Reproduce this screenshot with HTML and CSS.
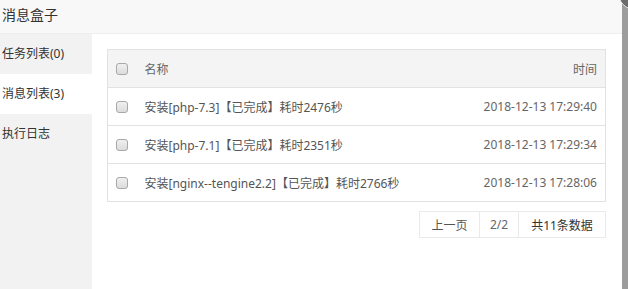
FILE: index.html
```html
<!DOCTYPE html>
<html lang="zh-CN">
<head>
<meta charset="utf-8">
<title>消息盒子</title>
<link rel="stylesheet" href="styles.css">
</head>
<body>
<div class="layer">
  <div class="layer-title">消息盒子</div>
  <span class="layer-close"></span>
  <div class="layer-body">
    <ul class="side">
      <li class="side-item">任务列表(0)</li>
      <li class="side-item active">消息列表(3)</li>
      <li class="side-item">执行日志</li>
    </ul>
    <div class="main">
      <table class="tbl">
        <thead>
          <tr>
            <th class="c-chk"><span class="chk"></span></th>
            <th class="c-name">名称</th>
            <th class="c-time">时间</th>
          </tr>
        </thead>
        <tbody>
          <tr>
            <td class="c-chk"><span class="chk"></span></td>
            <td class="c-name">安装[php-7.3]【已完成】耗时2476秒</td>
            <td class="c-time">2018-12-13 17:29:40</td>
          </tr>
          <tr>
            <td class="c-chk"><span class="chk"></span></td>
            <td class="c-name">安装[php-7.1]【已完成】耗时2351秒</td>
            <td class="c-time">2018-12-13 17:29:34</td>
          </tr>
          <tr>
            <td class="c-chk"><span class="chk"></span></td>
            <td class="c-name">安装[nginx--tengine2.2]【已完成】耗时2766秒</td>
            <td class="c-time">2018-12-13 17:28:06</td>
          </tr>
        </tbody>
      </table>
      <div class="pager-wrap">
        <div class="pager">
          <span class="pg pg-prev">上一页</span>
          <span class="pg pg-num">2/2</span>
          <span class="pg pg-total">共11条数据</span>
        </div>
      </div>
    </div>
  </div>
</div>
</body>
</html>
```
FILE: styles.css
```css
html, body {
  margin: 0;
  padding: 0;
}
body {
  width: 628px;
  height: 289px;
  overflow: hidden;
  background: #9c9c9c;
  font-family: "Noto Sans", "Noto Sans CJK SC", sans-serif;
  color: #333;
}
.layer {
  position: relative;
  width: 622px;
  height: 289px;
  background: #fff;
  display: flex;
  flex-direction: column;
}
.layer-title {
  height: 33px;
  line-height: 30px;
  padding-left: 2px;
  font-size: 14px;
  color: #333;
  background: #f8f8f8;
  border-bottom: 1px solid #eee;
  flex: none;
}
.layer-close {
  position: absolute;
  right: -30px;
  top: -24px;
  width: 32px;
  height: 32px;
  border-radius: 50%;
  background: #6b6b6b;
  border: 1px solid #e8e8e8;
}
.layer-body {
  flex: 1;
  display: flex;
}
.side {
  list-style: none;
  margin: 0;
  padding: 0;
  width: 92px;
  background: #f2f2f2;
  flex: none;
}
.side-item {
  height: 40px;
  line-height: 39px;
  padding-left: 2px;
  font-size: 12px;
  color: #333;
}
.side-item.active {
  background: #fff;
}
.main {
  flex: 1;
  padding: 15px 16px 0 15px;
}
.tbl {
  width: 100%;
  border-collapse: collapse;
  border: 1px solid #e2e2e2;
  font-size: 12px;
}
.tbl th, .tbl td {
  height: 38px;
  padding: 0;
  border-bottom: 1px solid #e2e2e2;
  font-weight: normal;
  color: #555;
  box-sizing: border-box;
}
.tbl thead tr {
  background: #f4f4f4;
}
.tbl th {
  color: #666;
}
.c-chk {
  width: 37px;
  padding-left: 8px !important;
  text-align: left;
}
.c-name {
  text-align: left;
}
.c-time {
  text-align: right;
  padding-right: 8px !important;
}
.tbl td.c-time {
  color: #666;
}
.chk {
  display: inline-block;
  width: 10px;
  height: 10px;
  border: 1px solid #a9a9a9;
  border-radius: 3px;
  background: linear-gradient(#f0f0f0, #dcdcdc);
  vertical-align: middle;
  position: relative;
  top: -1px;
}
.pager-wrap {
  display: flex;
  justify-content: flex-end;
  margin-top: 9px;
}
.pager {
  display: flex;
  border: 1px solid #eaeaea;
  height: 25px;
  font-size: 12px;
}
.pg {
  display: flex;
  align-items: center;
  justify-content: center;
  color: #333;
}
.pg + .pg {
  border-left: 1px solid #eaeaea;
}
.pg-prev { width: 59px; color: #555; }
.pg-num { width: 38px; color: #666; }
.pg-total { width: 86px; }
```
